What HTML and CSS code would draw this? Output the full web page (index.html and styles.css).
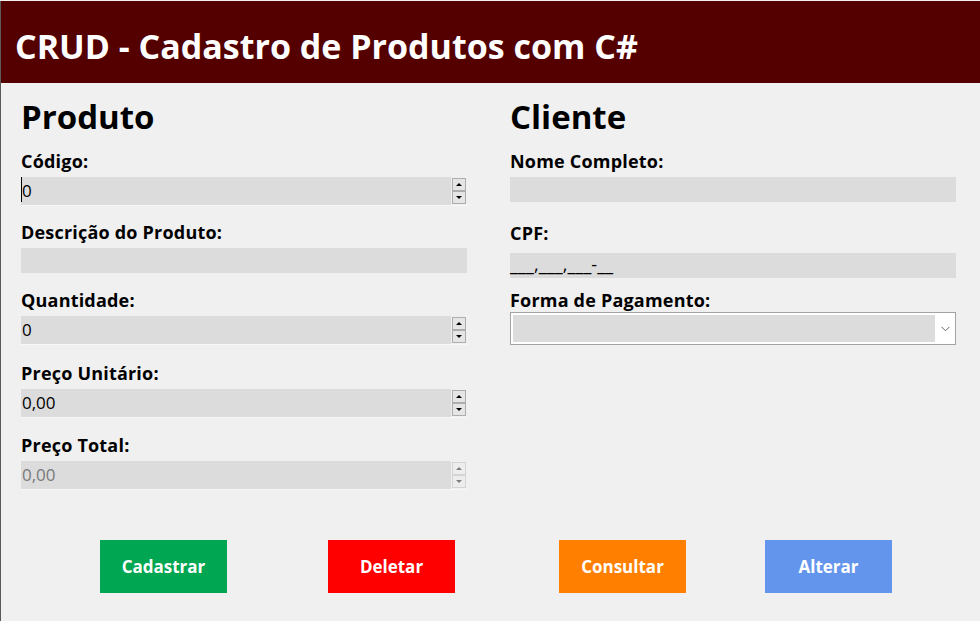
FILE: index.html
```html
<!DOCTYPE html>
<html lang="pt-BR">
<head>
<meta charset="utf-8">
<title>CRUD - Cadastro de Produtos com C#</title>
<link rel="stylesheet" href="styles.css">
</head>
<body>
<div class="window">
  <header class="titlebar"><h1 class="title">CRUD - Cadastro de Produtos com C#</h1></header>
  <main class="content">
    <section class="col">
      <h2 class="section-title">Produto</h2>
      <div class="field f1">
        <div class="label">Código:</div>
        <div class="spin">
          <div class="spin-input"><span class="caret"></span>0</div>
          <div class="spin-btns"><span class="spin-btn"><span class="tri up"></span></span><span class="spin-btn"><span class="tri down"></span></span></div>
        </div>
      </div>
      <div class="field f2">
        <div class="label">Descrição do Produto:</div>
        <div class="textbox"></div>
      </div>
      <div class="field f3">
        <div class="label">Quantidade:</div>
        <div class="spin">
          <div class="spin-input">0</div>
          <div class="spin-btns"><span class="spin-btn"><span class="tri up"></span></span><span class="spin-btn"><span class="tri down"></span></span></div>
        </div>
      </div>
      <div class="field f4">
        <div class="label">Preço Unitário:</div>
        <div class="spin">
          <div class="spin-input">0,00</div>
          <div class="spin-btns"><span class="spin-btn"><span class="tri up"></span></span><span class="spin-btn"><span class="tri down"></span></span></div>
        </div>
      </div>
      <div class="field f5">
        <div class="label">Preço Total:</div>
        <div class="spin disabled">
          <div class="spin-input">0,00</div>
          <div class="spin-btns"><span class="spin-btn"><span class="tri up"></span></span><span class="spin-btn"><span class="tri down"></span></span></div>
        </div>
      </div>
    </section>
    <section class="col">
      <h2 class="section-title">Cliente</h2>
      <div class="field f1">
        <div class="label">Nome Completo:</div>
        <div class="textbox"></div>
      </div>
      <div class="field f2b">
        <div class="label label-loose">CPF:</div>
        <div class="textbox mask">___,___,___-__</div>
      </div>
      <div class="field f3b">
        <div class="label label-tight">Forma de Pagamento:</div>
        <div class="combo">
          <div class="combo-inner"></div>
          <svg class="chevron" width="9" height="6" viewBox="0 0 9 6"><path d="M0.5 0.8 L4.5 4.8 L8.5 0.8" fill="none" stroke="#666" stroke-width="1"/></svg>
        </div>
      </div>
    </section>
  </main>
  <div class="actions">
    <button class="btn btn-green">Cadastrar</button>
    <button class="btn btn-red">Deletar</button>
    <button class="btn btn-orange">Consultar</button>
    <button class="btn btn-blue">Alterar</button>
  </div>
</div>
</body>
</html>
```
FILE: styles.css
```css
html, body {
  margin: 0;
  padding: 0;
  background: #f0f0f0;
}
body {
  width: 980px;
  height: 621px;
  overflow: hidden;
  font-family: "Open Sans", "Noto Sans", sans-serif;
  color: #000;
}
.window {
  height: 621px;
  border-left: 1px solid #5a5a5a;
  box-sizing: border-box;
}
.titlebar {
  margin-top: 1px;
  height: 82px;
  background: #540000;
  padding-left: 14px;
  box-sizing: border-box;
  overflow: hidden;
}
.title {
  margin: 0;
  color: #fff;
  font-size: 34px;
  font-weight: 700;
  line-height: 90px;
  height: 82px;
  white-space: nowrap;
}
.content {
  display: grid;
  grid-template-columns: 446px 446px;
  column-gap: 43px;
  padding-left: 20px;
}
.section-title {
  margin: 0;
  font-size: 33px;
  font-weight: 700;
  line-height: 40px;
  height: 40px;
  margin-top: 14px;
}
.field {
  display: flex;
  flex-direction: column;
}
.label {
  font-size: 18px;
  font-weight: 700;
  letter-spacing: 0.2px;
  line-height: 22px;
  height: 22px;
  margin-bottom: 5px;
  white-space: nowrap;
}
.label-loose { margin-bottom: 9px; }
.label-tight { margin-bottom: 1px; }
.f1 { margin-top: 13px; }
.f2 { margin-top: 15px; }
.f3 { margin-top: 16px; }
.f4 { margin-top: 17px; }
.f5 { margin-top: 16px; }
.f2b { margin-top: 20px; }
.f3b { margin-top: 11px; }
.spin {
  display: flex;
  height: 29px;
  border-bottom: 1px solid #f7f7f7;
  box-sizing: border-box;
}
.spin-input {
  position: relative;
  flex: 1;
  background: #dcdcdc;
  font-size: 17px;
  line-height: 28px;
  padding-left: 1px;
}
.caret {
  position: absolute;
  left: 0;
  top: 0;
  width: 1px;
  height: 25px;
  background: #000;
}
.spin-btns {
  width: 16px;
  display: flex;
  flex-direction: column;
  padding: 1px 0 0 1px;
  box-sizing: border-box;
  background: #f0f0f0;
}
.spin-btn {
  height: 13px;
  width: 14px;
  box-sizing: border-box;
  border: 1px solid #adadad;
  background: #e5e5e5;
  display: flex;
  align-items: center;
  justify-content: center;
}
.tri {
  width: 0;
  height: 0;
  border-left: 3px solid transparent;
  border-right: 3px solid transparent;
}
.tri.up { border-bottom: 3px solid #000; }
.tri.down { border-top: 3px solid #000; }
.disabled .spin-input { color: #7a7a7a; }
.disabled .spin-btn { border-color: #d4d4d4; background: #ededed; }
.disabled .tri.up { border-bottom-color: #7e7e7e; }
.disabled .tri.down { border-top-color: #7e7e7e; }
.textbox {
  height: 25px;
  background: #dcdcdc;
}
.mask {
  font-size: 18px;
  line-height: 18px;
  box-sizing: border-box;
  padding-top: 2px;
  letter-spacing: 0.1px;
  white-space: nowrap;
}
.combo {
  height: 33px;
  border: 1px solid #a3a3a3;
  background: #fff;
  box-sizing: border-box;
  padding: 2px 20px 2px 2px;
  position: relative;
}
.combo-inner {
  height: 100%;
  background: #dcdcdc;
}
.chevron {
  position: absolute;
  right: 5px;
  top: 13px;
}
.actions {
  display: flex;
  padding-left: 99px;
  margin-top: 50px;
}
.btn {
  width: 127px;
  height: 53px;
  border: none;
  color: #fff;
  font-family: "Open Sans", "Noto Sans", sans-serif;
  font-size: 17px;
  font-weight: 700;
  padding: 0;
  margin: 0;
}
.btn-green { background: #00a651; }
.btn-red { background: #ff0000; margin-left: 101px; }
.btn-orange { background: #ff8000; margin-left: 104px; }
.btn-blue { background: #6495ed; margin-left: 79px; }
```
